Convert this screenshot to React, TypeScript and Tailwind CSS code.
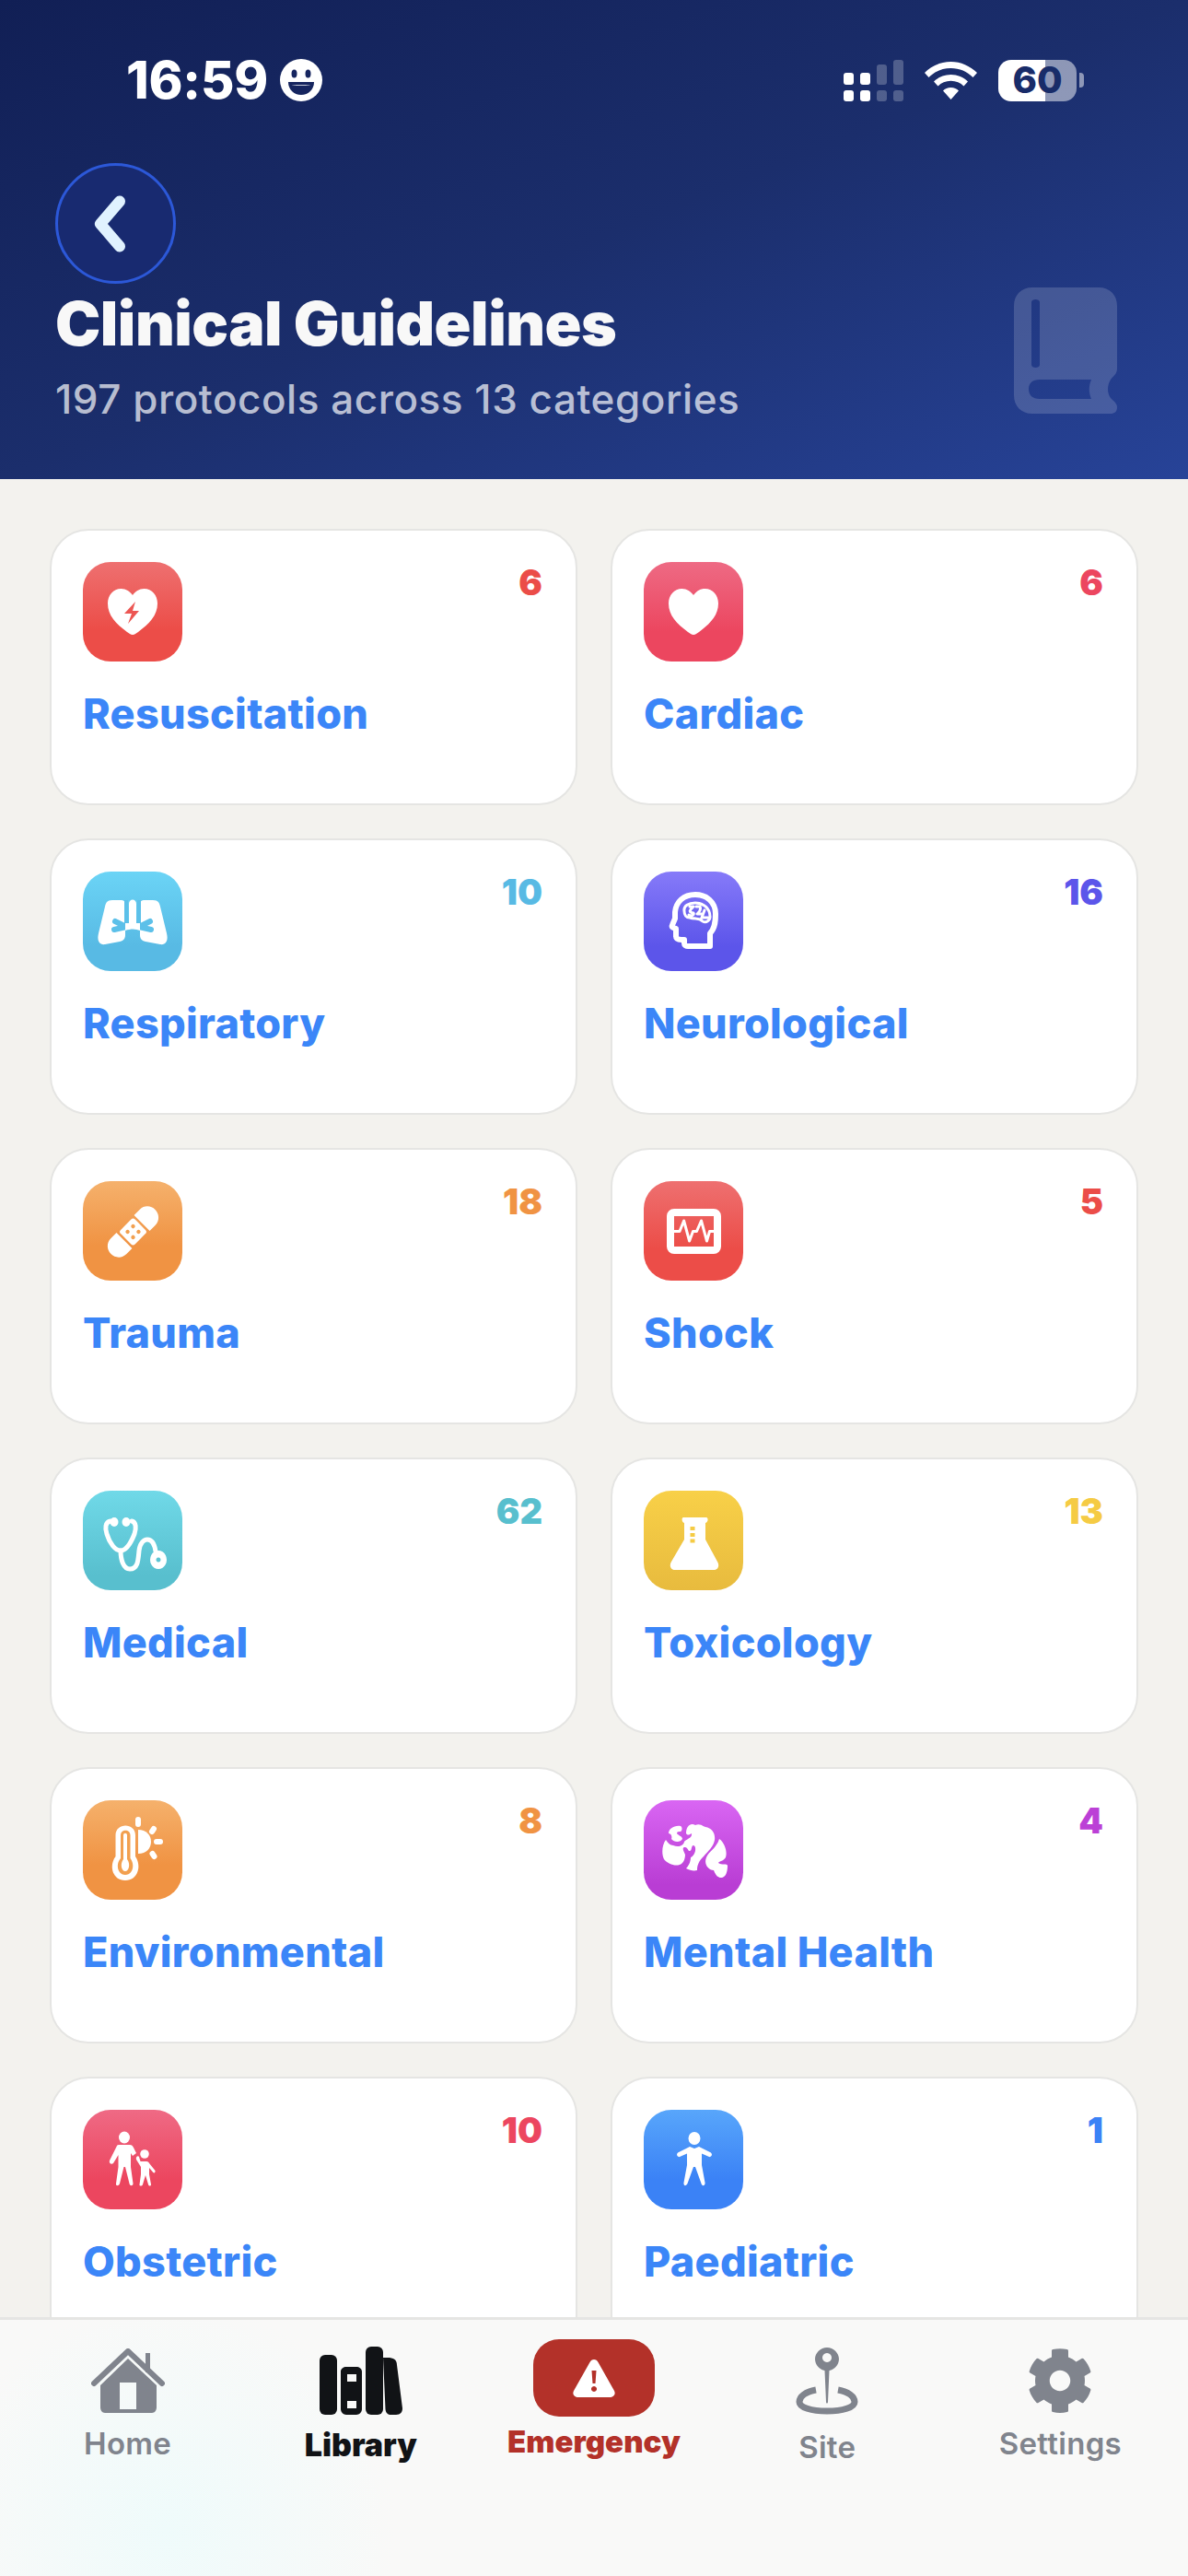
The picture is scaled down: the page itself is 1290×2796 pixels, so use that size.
import React from "react";
import { FaCog } from "react-icons/fa";

const HEART =
  "M54 79c-2 0-4-1.5-6-3C36 67 27 58 27 45 27 36 33 29 41.5 29 47 29 51 32 54 36 57 32 61 29 66.5 29 75 29 81 36 81 45 81 58 72 67 60 76c-2 1.500-4 3-6 3Z";

function Svg({ children }: { children: React.ReactNode }) {
  return (
    <svg viewBox="0 0 108 108" className="w-[108px] h-[108px]" fill="none">
      {children}
    </svg>
  );
}

function Aed() {
  return (
    <Svg>
      <path fillRule="evenodd" fill="#fff" d={HEART + "M57 43 45 56h8l-4 11 12-14h-7l3-10Z"} />
    </Svg>
  );
}
function Heart() {
  return (
    <Svg>
      <path fill="#fff" d={HEART} />
    </Svg>
  );
}
function Lungs() {
  const c = "#5cc0e9";
  return (
    <Svg>
      <g transform="translate(0 1)">
        <path fill="#fff" d="M32 30C26 30 25 33 24 37L17 66C15 74 18 79 24 78L40 75C44 74 46 72 46 68V34C46 31 44 30 41 30Z" />
        <path fill="#fff" d="M76 30C82 30 83 33 84 37L91 66C93 74 90 79 84 78L68 75C64 74 62 72 62 68V34C62 31 64 30 67 30Z" />
        <path stroke={c} strokeWidth="6" strokeLinecap="round" d="M47 59 35 53M47 59 34 62M61 59 73 53M61 59 74 62" />
        <path stroke={c} strokeWidth="4" d="M47 30V56M61 30V56" />
        <path fill="#fff" d="M50 34C50 28 58 28 58 34V55H62V63C57 61 52 61 46 63V55H50Z" />
      </g>
    </Svg>
  );
}
function Head() {
  return (
    <Svg>
      <path
        stroke="#fff"
        strokeWidth="6"
        strokeLinejoin="round"
        d="M72 81V67C78 61 78 52 78 46 78 33 68 25 56 25 43 25 35 33 34 44V51L31 58C30 60 31 61 35 62V70C35 73 37 74 41 74H44V78C44 80 46 81 48 81Z"
      />
      <path
        stroke="#fff"
        strokeWidth="3"
        strokeLinejoin="round"
        strokeLinecap="round"
        d="M44 43C43 37 49 34 56 34 65 34 72 40 72 49 72 53 68 56 64 54 60 50 56 52 50 50 46 50 44 47 44 43ZM50 38H54C50 42 48 44 54 45 55 47 52 49 49 47M57 38H61C63 42 60 44 58 46H63M66 42 63 50H70"
      />
    </Svg>
  );
}
function Bandage() {
  const c = "#f2a050";
  return (
    <Svg>
      <g transform="rotate(-45 54.500 55)">
        <path fill="#fff" d="M41 43V67H32.500C25 67 20.500 61 20.500 55 20.500 49 25 43 32.500 43ZM68 43V67H76.500C84 67 88.500 61 88.500 55 88.500 49 84 43 76.500 43Z" />
        <rect x="43.500" y="44" width="22" height="22" rx="3" fill="#fff" />
        <circle cx="50.300" cy="50.800" r="2.200" fill={c} />
        <circle cx="58.700" cy="50.800" r="2.200" fill={c} />
        <circle cx="50.300" cy="59.200" r="2.200" fill={c} />
        <circle cx="58.700" cy="59.200" r="2.200" fill={c} />
      </g>
    </Svg>
  );
}
function Monitor() {
  return (
    <Svg>
      <rect x="29" y="34" width="51" height="41" rx="4" stroke="#fff" strokeWidth="8" />
      <path stroke="#fff" strokeWidth="3" strokeLinejoin="round" d="M33 54.500H39L43.600 43 49.600 65 53.500 54.500H57.500L62.500 43 68.500 65 71.500 54.500H77" />
    </Svg>
  );
}
function Stetho() {
  return (
    <Svg>
      <g transform="translate(0 3)">
        <g stroke="#fff" strokeWidth="5" strokeLinecap="round">
          <path d="M30 30C24 31 24 38 26 44 29 54 35 62 41 62 47 62 52 54 56 44 58 38 58 31 53 30" />
          <path d="M41 62C41 72 44 82 51 82 60 82 60 72 61 62 62 54 66 50 70 50 76 50 78 56 79 63" />
        </g>
        <ellipse cx="34" cy="31" rx="4.500" ry="5" fill="#fff" />
        <ellipse cx="47" cy="31" rx="4.500" ry="5" fill="#fff" />
        <path fillRule="evenodd" fill="#fff" d="M82 62a9 10 0 1 0 .01 0ZM82 69.500a2.500 2.500 0 1 1-.01 0Z" />
      </g>
    </Svg>
  );
}
function Flask() {
  const c = "#f5cb44";
  return (
    <Svg>
      <g transform="translate(0 3)">
        <path fill="#fff" d="M43 26H68C70 26 70.500 31 67 32V50L80 74C83 79 80 83 76 83H34C30 83 27 79 30 74L44 50V32C41 31 41 26 43 26Z" />
        <rect x="50.500" y="36" width="5" height="4" fill={c} />
        <rect x="50.500" y="43" width="5" height="4" fill={c} />
        <rect x="50.500" y="49.500" width="5" height="4" fill={c} />
      </g>
    </Svg>
  );
}
function Thermo() {
  const c = "#f2a050";
  return (
    <Svg>
      <path fill="#fff" d="M35.500 38C35.500 24 57 24 57 38V61C64 71 60 87 46 87 32 87 28 71 35.500 61Z" />
      <path fill={c} d="M41 38C41 31 51.500 31 51.500 38V63C57 70 54 81 46 81 38 81 35 70 41 63Z" />
      <path fill="#fff" d="M44 38C44 35 48 35 48 38V64C52 69 50 77 46 77 42 77 40 69 44 64Z" />
      <path fill="#fff" d="M60 32C69 32 74 38 74 45 74 52 69 58 60 58Z" />
      <g stroke="#fff" strokeWidth="6" strokeLinecap="round">
        <path d="M60 21V26M77 31 75 34M80 45H84M75.500 58 77.500 61" />
      </g>
    </Svg>
  );
}
function Brain() {
  return (
    <Svg>
      <g fill="#fff">
        <path d="M40 28C33 27 27 31 27 36 30 36 31 40 30 42 33 46 40 46 42 42 42 39 37 38 36 36 36 34 38 34 40 34 42 33 42 29 40 28Z" />
        <path d="M46 36C46 28 51 24 56 27 61 25 64 28 67 29 74 30 78 36 77 43 76 50 70 55 65 61 60 66 58 70 58 76 54 77 50 76 46 74 50 70 51 65 51 62 56 60 58 50 54 49 51 49 53 56 49 55 47 52 47 51 44 51 41 52 44 56 45 59 45 62 44 66 42 68 37 73 27 70 22 64 19 58 20 48 24 43 26 46 29 49 32 49 37 51 43 50 44 45 46 42 53 41 52 36 50 37 48 39 46 36Z" />
        <path d="M82 42C88 46 91 56 89 62 87 66 82 66 81 68 84 71 91 68 91 71 91 78 89 84 84 84 80 84 78 81 76 76 70 76 65 69 68 62 71 55 79 52 82 42Z" />
      </g>
    </Svg>
  );
}
function Family() {
  return (
    <Svg>
      <ellipse cx="45" cy="30" rx="6" ry="6.500" fill="#fff" />
      <path fill="#fff" d="M39 38H51C53 38 54 39 55 41L58 47 54 50 52 47V62L54.500 80C54.500 83 51 83 50.500 80L46 62H44.500L40 80C39 83 35.500 83 36 80L38.500 62V49L33 58C31 60 28 58 29 55L36 41C37 39 37 38 39 38Z" />
      <circle cx="67" cy="48" r="4.800" fill="#fff" />
      <path fill="#fff" d="M62.500 56H69C71 56 71.500 57 72 58L78.500 66C79 69 76.500 69 75.500 67L72 63V70L74 81C74 83 71.500 83 71 81L68 71 65 81C64.500 83 61 83 61.500 81L63 70V62L58 54C57 51 60 49 61 51Z" />
    </Svg>
  );
}
function Person() {
  return (
    <Svg>
      <ellipse cx="55" cy="31" rx="6.500" ry="7" fill="#fff" />
      <path fill="#fff" d="M50 40 55 42 60 40 72 46C76 48 73 52 71 51L63 47.500V60L66.500 79C67 83 63 83 62.500 80L56 62H54L47.500 80C46 83 43 83 43.500 79L47 60V47.500L39 51C37 52 34 48 38 46Z" />
    </Svg>
  );
}

type Cat = { name: string; n: number; bg: string; color: string; Icon: () => React.ReactElement };

const cats: Cat[] = [
  { name: "Resuscitation", n: 6, bg: "bg-[linear-gradient(180deg,#ee7070,#ec4d48_68%)]", color: "text-[#eb4d48]", Icon: Aed },
  { name: "Cardiac", n: 6, bg: "bg-[linear-gradient(180deg,#ee6a84,#ec465f_70%)]", color: "text-[#ec465f]", Icon: Heart },
  { name: "Respiratory", n: 10, bg: "bg-[linear-gradient(180deg,#6bd4f6,#58bae4_75%)]", color: "text-[#58bae4]", Icon: Lungs },
  { name: "Neurological", n: 16, bg: "bg-[linear-gradient(180deg,#867af9,#5c55ea_75%)]", color: "text-[#5c55ea]", Icon: Head },
  { name: "Trauma", n: 18, bg: "bg-[linear-gradient(180deg,#f5b16c,#f09343_65%)]", color: "text-[#f09343]", Icon: Bandage },
  { name: "Shock", n: 5, bg: "bg-[linear-gradient(180deg,#ee7070,#ec4d48_68%)]", color: "text-[#eb4d48]", Icon: Monitor },
  { name: "Medical", n: 62, bg: "bg-[linear-gradient(180deg,#70d9e8,#58bfce_85%)]", color: "text-[#58bfce]", Icon: Stetho },
  { name: "Toxicology", n: 13, bg: "bg-[linear-gradient(180deg,#f8d048,#e8bb3e)]", color: "text-[#f5cb44]", Icon: Flask },
  { name: "Environmental", n: 8, bg: "bg-[linear-gradient(180deg,#f5b16c,#f09343_65%)]", color: "text-[#f09343]", Icon: Thermo },
  { name: "Mental Health", n: 4, bg: "bg-[linear-gradient(180deg,#d966f3,#b93dd4_85%)]", color: "text-[#bb40d6]", Icon: Brain },
  { name: "Obstetric", n: 10, bg: "bg-[linear-gradient(180deg,#ef6a85,#ec465f_70%)]", color: "text-[#ec465f]", Icon: Family },
  { name: "Paediatric", n: 1, bg: "bg-[linear-gradient(180deg,#58a6fb,#3b82f6_70%)]", color: "text-[#3b82f6]", Icon: Person },
];

function Card({ c }: { c: Cat }) {
  return (
    <div className="h-[300px] rounded-[42px] border-2 border-[#e5e5e3] bg-white p-[34px] shrink-0">
      <div className="flex items-start justify-between">
        <div className={`w-[108px] h-[108px] rounded-[30px] ${c.bg}`}>
          <c.Icon />
        </div>
        <span className={`text-[38px] leading-[48px] font-black mr-[2px] -mt-[2px] ${c.color}`}>{c.n}</span>
      </div>
      <div className="mt-[30px] text-[45px] leading-[53px] font-extrabold tracking-[0.3px] text-[#3b86f8]">{c.name}</div>
    </div>
  );
}

function StatusBar() {
  return (
    <div className="flex items-center justify-between h-[46px] pl-[137px] pr-[113px]">
      <div className="flex items-center gap-[13px]">
        <span className="text-[56px] leading-[46px] font-extrabold tracking-[-0.2px] text-white">16:59</span>
        <svg viewBox="0 0 46 46" className="w-[46px] h-[46px]">
          <circle cx="23" cy="23" r="23" fill="#fff" />
          <ellipse cx="15.500" cy="16" rx="3" ry="4.500" fill="#16255f" />
          <ellipse cx="30.500" cy="16" rx="3" ry="4.500" fill="#16255f" />
          <path d="M9 25H37C37 33 31 39 23 39 15 39 9 33 9 25Z" fill="#16255f" />
          <path d="M13 28H33C32 29 14 29 13 28Z" fill="#fff" />
        </svg>
      </div>
      <div className="flex items-center">
        <svg viewBox="0 0 65 45" className="w-[65px] h-[45px]">
          <g fill="#fff">
            <rect x="0" y="14" width="11" height="13" rx="3" />
            <rect x="18" y="14" width="11" height="13" rx="3" />
            <rect x="0" y="33" width="11" height="12" rx="3" />
            <rect x="18" y="33" width="11" height="12" rx="3" />
          </g>
          <g fill="#fff" fillOpacity=".24">
            <rect x="36" y="5" width="11" height="22" rx="3" />
            <rect x="54" y="0" width="11" height="27" rx="3" />
            <rect x="36" y="33" width="11" height="12" rx="3" />
            <rect x="54" y="33" width="11" height="12" rx="3" />
          </g>
        </svg>
        <svg viewBox="0 0 57 41" className="w-[57px] h-[41px] ml-[23px]">
          <path fill="#fff" d="M28.500 0C17.500 0 8 4.500 0 12L4.500 17C11 10.500 19 7 28.500 7 38 7 46 10.500 52.500 17L57 12C49 4.500 39.500 0 28.500 0ZM28.500 14C21 14 15 16.800 10 21.500L14.500 26.500C18 23 23 20.800 28.500 20.800 34 20.800 39 23 42.500 26.500L47 21.500C42 16.800 36 14 28.500 14ZM28.500 28C25 28 22 29.300 20 31.500L28.500 41 37 31.500C35 29.300 32 28 28.500 28Z" />
        </svg>
        <div className="ml-[23px] flex items-center">
          <div className="w-[85px] h-[45px] rounded-[14px] bg-[linear-gradient(90deg,#fff_60%,rgba(255,255,255,.5)_60%)] flex items-center justify-center text-[#182c69] text-[40px] font-extrabold leading-none">
            60
          </div>
          <div className="ml-[3px] w-[5px] h-[16px] rounded-r-[4px] bg-white/50" />
        </div>
      </div>
    </div>
  );
}

function HomeIcon() {
  return (
    <svg viewBox="0 0 80 71" className="w-[80px] h-[71px] mt-[6px]">
      <path fill="#80848d" d="M59 5H64V26H59Z" />
      <path fill="none" stroke="#80848d" strokeWidth="6" strokeLinecap="round" strokeLinejoin="round" d="M3 38 40 3 77 38" />
      <path fill="#80848d" fillRule="evenodd" d="M40 12 71 41V65C71 68 69 71 66 71H15C12 71 10 68 10 65V41ZM31 38V67H49V38Z" transform="translate(0 -1)" />
    </svg>
  );
}
function LibraryIcon() {
  return (
    <svg viewBox="0 0 90 74" className="w-[90px] h-[74px] mt-[6px]">
      <g fill="#111316">
        <rect x="0" y="9" width="19" height="65" rx="6" />
        <path fillRule="evenodd" d="M29 22H40C43 22 46 24 46 27V68C46 71 43 74 40 74H29C26 74 23 71 23 68V27C23 24 26 22 29 22ZM30 30V38H40V30ZM30 59V67H40V59Z" />
        <rect x="50" y="0" width="19" height="74" rx="6" />
        <path d="M69 12H74C80 12 84 14 84 20L90 67C90 71 88 74 83 74H78C74 74 72 72 71.500 68Z" />
      </g>
    </svg>
  );
}
function SiteIcon() {
  return (
    <svg viewBox="0 0 68 74" className="w-[68px] h-[74px] mt-[6px]">
      <path fill="#80848d" fillRule="evenodd" d="M34 1C41 1 47 7 47 13.500 47 20 42 25 36.500 26L35 60C34.900 62 33.100 62 33 60L31.500 26C26 25 21 20 21 13.500 21 7 27 1 34 1ZM34 7A5 5 0 1 0 34.010 7Z" />
      <path fill="none" stroke="#80848d" strokeWidth="7" d="M22 47C11 49 4 54 4 60 4 66 17 70 34 70 51 70 64 66 64 60 64 54 57 49 46 47" />
    </svg>
  );
}
function AlertIcon() {
  return (
    <svg viewBox="0 0 46 41" className="w-[46px] h-[41px]">
      <path fill="#fff" fillRule="evenodd" d="M23 0C25 0 26.500 1 27.500 3L45 34C47 38 44 41 40 41H6C2 41 -1 38 1 34L18.500 3C19.500 1 21 0 23 0ZM20.500 12 21.500 26H24.500L25.500 12ZM23 29A3 3 0 1 0 23.010 29Z" />
    </svg>
  );
}

function NavItem({ icon, label, cls }: { icon: React.ReactNode; label: string; cls: string }) {
  return (
    <div className="flex flex-1 flex-col items-center">
      <div className="h-[84px] flex items-center justify-center">{icon}</div>
      <span className={cls}>{label}</span>
    </div>
  );
}

export default function App() {
  return (
    <div className="w-[1290px] h-[2796px] overflow-hidden flex flex-col bg-[#f3f2ee] font-['Inter','Liberation_Sans',sans-serif]">
      <header className="h-[520px] shrink-0 pt-[64px] bg-[linear-gradient(to_bottom_right,#111f55_0%,#1b2e6c_50%,#274398_100%)]">
        <StatusBar />
        <div className="mt-[67px] pl-[60px] pr-[77px] flex items-end justify-between">
          <div>
            <button className="w-[131px] h-[131px] rounded-full border-[3px] border-[#2c58d8] bg-[#182a70] flex items-center justify-center">
              <svg viewBox="0 0 44 70" className="w-[44px] h-[70px] mr-[8px]" fill="none">
                <path d="M30 10.500 9 35 30 59.500" stroke="#e0f2ff" strokeWidth="12" strokeLinecap="round" strokeLinejoin="round" />
              </svg>
            </button>
            <h1 className="mt-[5px] text-[66px] leading-[76px] font-black tracking-[-0.5px] text-[#f8f8f8]">Clinical Guidelines</h1>
            <p className="mt-[18px] text-[44px] leading-[52px] font-medium tracking-[0.55px] text-white/70">197 protocols across 13 categories</p>
          </div>
          <svg viewBox="0 0 112 137" className="w-[112px] h-[137px] mb-[10px]">
            <path
              fillRule="evenodd"
              fill="#fff"
              fillOpacity=".16"
              d="M20 0H92C104 0 112 8 112 20V88C112 94 108 96 105 100 101 106 101 115 105 120 109 124 112 126 112 130 112 135 109 137 105 137H20C8 137 0 129 0 117V20C0 8 8 0 20 0ZM19 16V84C19 88 28 88 28 84V16C28 12 19 12 19 16ZM28 100C20 100 16 104 16 110 16 117 20 121 28 121H84C81 114 81 107 84 100Z"
            />
          </svg>
        </div>
      </header>
      <main className="flex-1 min-h-0 overflow-hidden px-[54px] pt-[54px]">
        <div className="grid grid-cols-2 gap-[36px]">
          {cats.map((c) => (
            <Card key={c.name} c={c} />
          ))}
        </div>
      </main>
      <nav className="h-[281px] shrink-0 border-t-[3px] border-[#e5e5e3] bg-[radial-gradient(circle_at_14%_82%,#effbfb_0%,transparent_22%),linear-gradient(#f9f9f8,#f9f9f8)] px-[12px] pt-[21px] flex items-start">
        <NavItem icon={<HomeIcon />} label="Home" cls="mt-[10px] text-[33px] leading-[38px] font-semibold tracking-[0.3px] text-[#80848d]" />
        <NavItem icon={<LibraryIcon />} label="Library" cls="mt-[12px] text-[34px] leading-[38px] font-black text-[#111316]" />
        <NavItem
          icon={
            <div className="w-[132px] h-[84px] rounded-[28px] bg-[#b33129] flex items-center justify-center">
              <AlertIcon />
            </div>
          }
          label="Emergency"
          cls="mt-[8px] text-[33px] leading-[38px] font-black text-[#b33129]"
        />
        <NavItem icon={<SiteIcon />} label="Site" cls="mt-[14px] text-[33px] leading-[38px] font-semibold tracking-[0.3px] text-[#80848d]" />
        <NavItem icon={<FaCog className="w-[72px] h-[72px] mt-[6px] text-[#80848d]" />} label="Settings" cls="mt-[10px] text-[33px] leading-[38px] font-semibold tracking-[0.3px] text-[#80848d]" />
      </nav>
    </div>
  );
}
